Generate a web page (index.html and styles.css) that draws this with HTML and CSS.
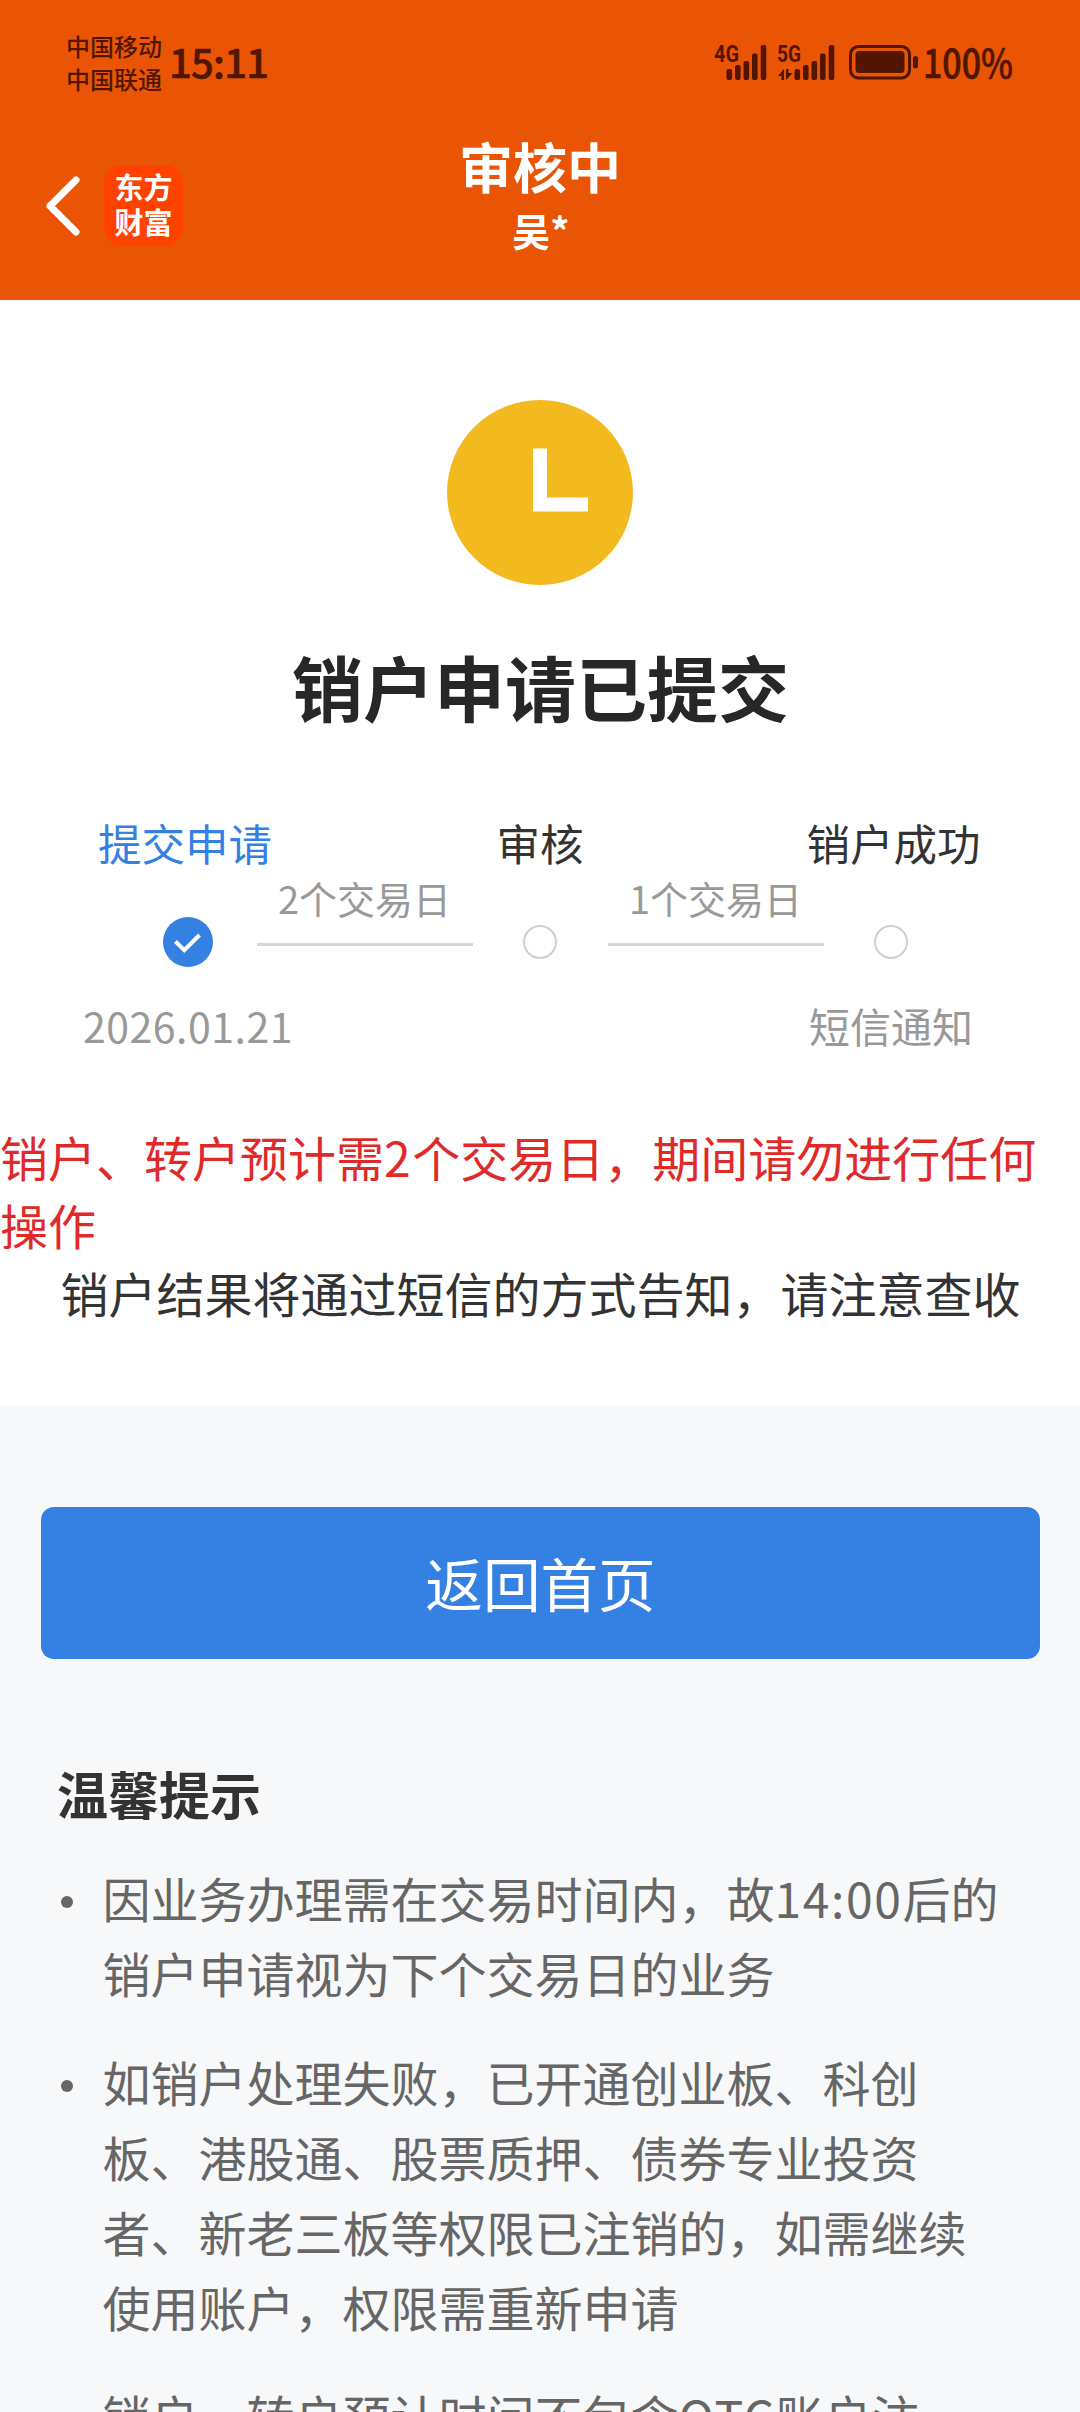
FILE: index.html
```html
<!DOCTYPE html>
<html lang="zh-CN">
<head>
<meta charset="utf-8">
<title>审核中</title>
<link rel="stylesheet" href="styles.css">
</head>
<body>
<header class="header">
  <div class="status-bar">
    <div class="status-left">
      <div class="carriers"><span>中国移动</span><span>中国联通</span></div>
      <svg class="clock-text" width="98" height="40" viewBox="0 0 98 40"><text x="0" y="34" textLength="100" lengthAdjust="spacing">15:11</text></svg>
    </div>
    <div class="status-right">
      <svg class="signal" width="54" height="36" viewBox="0 0 54 36">
        <text x="-1" y="17" textLength="25" lengthAdjust="spacingAndGlyphs">4G</text>
        <rect x="11.500" y="24" width="5.6" height="11" rx="2"/><rect x="20" y="20" width="5.6" height="15" rx="2"/><rect x="28.500" y="16" width="5.6" height="19" rx="2"/><rect x="37" y="8.5" width="5.6" height="26.5" rx="2"/><rect x="45.700" y="0" width="5.6" height="35" rx="2"/>
      </svg>
      <svg class="signal signal-data" width="60" height="36" viewBox="0 0 60 36">
        <text x="-1" y="17" textLength="24" lengthAdjust="spacingAndGlyphs">5G</text>
        <path d="M6 24v11H3.500V31H0zM8 24H10.500V28H14.500L8 35z"/>
        <rect x="16.500" y="24" width="5.6" height="11" rx="2"/><rect x="25" y="20" width="5.6" height="15" rx="2"/><rect x="33.500" y="16" width="5.6" height="19" rx="2"/><rect x="42" y="8.500" width="5.6" height="26.500" rx="2"/><rect x="50.700" y="0" width="5.600" height="35" rx="2"/>
      </svg>
      <svg class="battery" width="70" height="36" viewBox="0 0 70 36">
        <rect class="battery-case" x="1.500" y="1.500" width="59" height="31.500" rx="8"/>
        <rect x="6.500" y="6" width="49" height="22" rx="3.500"/>
        <rect x="64" y="11" width="5" height="12.500" rx="2.500"/>
      </svg>
      <svg class="percent" width="90" height="40" viewBox="0 0 90 40"><text x="-1" y="33.500" textLength="90" lengthAdjust="spacingAndGlyphs">100%</text></svg>
    </div>
  </div>
  <nav class="nav">
    <div class="nav-left">
      <svg width="34" height="62" viewBox="0 0 34 62"><path class="chevron" d="M31 6L5 32L31 58"/></svg>
      <div class="logo"><span>东方</span><span>财富</span></div>
    </div>
    <div class="nav-title"><h1>审核中</h1><p>吴*</p></div>
  </nav>
</header>

<main>
  <section class="result">
    <svg class="pending" width="186" height="185" viewBox="0 0 186 185"><ellipse cx="93" cy="92.500" rx="93" ry="92.500"/><path d="M86 48.500h14v49h41v14H86z"/></svg>
    <h2 class="result-title">销户申请已提交</h2>
    <div class="steps">
      <div class="step">
        <span class="step-name active">提交申请</span>
        <div class="step-dot"><svg class="done" width="50" height="50" viewBox="0 0 50 50"><circle cx="25" cy="25" r="25"/><path d="M12.500 24.500L21.300 33.200L36.500 18"/></svg></div>
        <span class="step-note date">2026.01.21</span>
      </div>
      <div class="step-link">2个交易日</div>
      <div class="step">
        <span class="step-name">审核</span>
        <div class="step-dot"><i class="ring"></i></div>
      </div>
      <div class="step-link">1个交易日</div>
      <div class="step">
        <span class="step-name last">销户成功</span>
        <div class="step-dot"><i class="ring"></i></div>
        <span class="step-note">短信通知</span>
      </div>
    </div>
    <p class="warning">销户、转户预计需<span class="digit">2</span>个交易日，期间请勿进行任何操作</p>
    <p class="notice">销户结果将通过短信的方式告知，请注意查收</p>
  </section>
  <section class="footer">
    <button class="home-button">返回首页</button>
    <h3 class="tips-title">温馨提示</h3>
    <ul class="tips">
      <li>因业务办理需在交易时间内，故<span class="latin">14:00</span>后的<br>销户申请视为下个交易日的业务</li>
      <li>如销户处理失败，已开通创业板、科创<br>板、港股通、股票质押、债券专业投资<br>者、新老三板等权限已注销的，如需继续<br>使用账户，权限需重新申请</li>
      <li>销户、转户预计时间不包含<span class="latin">OTC</span>账户注</li>
    </ul>
  </section>
</main>
</body>
</html>
```
FILE: styles.css
```css
* {
  box-sizing: border-box;
  margin: 0;
  padding: 0;
}

body {
  width: 1080px;
  height: 2412px;
  overflow: hidden;
  background: #f7f8fa;
  color: #333;
  font-family: "Noto Sans CJK SC", "Noto Sans", sans-serif;
}

svg {
  display: block;
  overflow: visible;
}

/* Header */
.header {
  height: 300px;
  background: #e95504;
  color: #fff;
}

.status-bar {
  display: flex;
  justify-content: space-between;
  height: 124px;
  padding: 0 66px 0 66px;
  color: #521600;
  fill: #521600;
}

.status-left,
.status-right {
  display: flex;
  align-items: center;
}

.carriers {
  display: flex;
  flex-direction: column;
  font-size: 24px;
  font-weight: 500;
  line-height: 33px;
}

.clock-text {
  margin: 4px 0 0 7px;
  font-size: 40px;
  font-weight: 500;
  stroke: #521600;
  stroke-width: 0.6;
}

.signal {
  margin: 2px 9px 0 0;
  font-family: Roboto, sans-serif;
  font-size: 23px;
  font-weight: 700;
}

.signal-data {
  margin-right: 11px;
}

.battery {
  margin-top: 2px;
}

.battery-case {
  fill: none;
  stroke: #521600;
  stroke-width: 3;
}

.percent {
  margin: 4px 0 0 5px;
  font-size: 40px;
  font-weight: 500;
  stroke: #521600;
  stroke-width: 0.6;
}

.nav {
  display: grid;
  grid-template-columns: 1fr auto 1fr;
  height: 176px;
  padding: 10px 45px 0;
}

.nav-left {
  display: flex;
  align-items: center;
  gap: 25px;
  height: 142px;
}

.chevron {
  fill: none;
  stroke: #fff;
  stroke-width: 7;
  stroke-linecap: round;
  stroke-linejoin: round;
}

.logo {
  display: flex;
  flex-direction: column;
  align-items: center;
  justify-content: center;
  width: 79px;
  height: 81px;
  padding-bottom: 3px;
  border-radius: 18px;
  background: #ff4200;
  font-size: 29px;
  font-weight: 700;
  line-height: 35px;
}

.nav-title {
  text-align: center;
}

.nav-title h1 {
  font-size: 54px;
  line-height: 64px;
}

.nav-title p {
  padding-left: 2px;
  font-size: 38px;
  font-weight: 700;
  line-height: 64px;
}

/* Result panel */
.result {
  height: 1106px;
  padding-top: 100px;
  background: #fff;
}

.pending {
  margin: 0 auto;
  fill: #f2ba1f;
}

.pending path {
  fill: #fff;
}

.result-title {
  margin-top: 50px;
  padding-left: 1px;
  color: #272727;
  font-size: 71px;
  line-height: 100px;
  text-align: center;
}

.steps {
  display: flex;
  justify-content: center;
  height: 273px;
  margin-top: 64px;
}

.step {
  display: flex;
  flex-direction: column;
  align-items: center;
  width: 135px;
  white-space: nowrap;
}

.step-name {
  font-size: 43.5px;
  line-height: 88px;
}

.step-name.active {
  margin-left: -8px;
  color: #3481e3;
}

.step-name.last {
  margin-left: 5px;
}

.step-dot {
  display: flex;
  align-items: center;
  height: 50px;
  margin-top: 30px;
}

.done {
  margin-left: -3px;
}

.done circle {
  fill: #3481e3;
}

.done path {
  fill: none;
  stroke: #fff;
  stroke-width: 4;
}

.ring {
  width: 34px;
  height: 34px;
  border: 2px solid #d0d0d0;
  border-radius: 50%;
}

.step-note {
  margin-top: 28px;
  color: #999;
  font-size: 41px;
  line-height: 60px;
}

.step-note.date {
  margin-left: -2px;
  letter-spacing: 0.5px;
}

.step-link {
  width: 216px;
  height: 147px;
  padding-top: 71px;
  border-bottom: 3px solid #d3d6da;
  color: #999;
  font-size: 38px;
  line-height: 56px;
  text-align: center;
  white-space: nowrap;
}

.warning,
.notice {
  font-size: 48px;
  line-height: 68px;
}

.warning {
  margin-top: 50px;
  color: #e02a2a;
}

.digit {
  letter-spacing: 1.5px;
}

.notice {
  padding-left: 1px;
  text-align: center;
  white-space: nowrap;
}

/* Action and tips */
.footer {
  padding: 101px 41px 0;
}

.home-button {
  display: block;
  width: 999px;
  height: 152px;
  padding-bottom: 3px;
  border: 0;
  border-radius: 13px;
  background: #3481e3;
  color: #fff;
  font-family: inherit;
  font-size: 57.6px;
}

.tips-title {
  margin: 99px 0 0 16px;
  font-size: 51px;
  line-height: 70px;
}

.tips {
  margin-top: 32px;
  padding-left: 61.5px;
  color: #666;
  font-size: 48px;
  line-height: 75px;
  list-style: none;
}

.tips li {
  position: relative;
  margin-bottom: 34px;
  white-space: nowrap;
}

.tips li::before {
  content: "";
  position: absolute;
  left: -42px;
  top: 36px;
  width: 12px;
  height: 12px;
  border-radius: 50%;
  background: #666;
}

.latin {
  letter-spacing: 1.6px;
}
```
